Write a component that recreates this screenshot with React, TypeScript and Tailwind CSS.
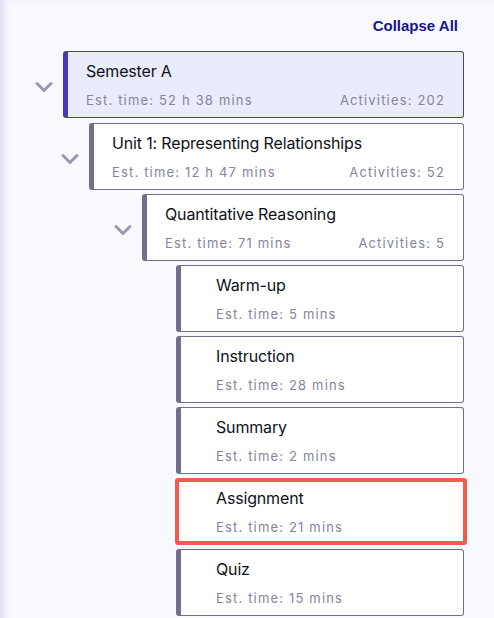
import { ChevronDown } from 'lucide-react'

type Node = {
  title: string
  time: string
  activities?: number
  level: 0 | 1 | 2 | 3
  active?: boolean
  focused?: boolean
}

const NODES: Node[] = [
  { title: 'Semester A', time: '52 h 38 mins', activities: 202, level: 0, active: true },
  { title: 'Unit 1: Representing Relationships', time: '12 h 47 mins', activities: 52, level: 1 },
  { title: 'Quantitative Reasoning', time: '71 mins', activities: 5, level: 2 },
  { title: 'Warm-up', time: '5 mins', level: 3 },
  { title: 'Instruction', time: '28 mins', level: 3 },
  { title: 'Summary', time: '2 mins', level: 3 },
  { title: 'Assignment', time: '21 mins', level: 3, focused: true },
  { title: 'Quiz', time: '15 mins', level: 3 },
]

const INDENT = ['pl-[25px]', 'pl-[51px]', 'pl-[104px]', 'pl-[176px]']

function Card({ node }: { node: Node }) {
  const leaf = node.level === 3

  let frame = 'border border-l-[5px] border-[#727089] bg-white'
  if (node.active) frame = 'border border-l-[5px] border-[#4a37c0] bg-[#e8ecfb]'
  if (node.focused) frame = 'border-[4px] border-[#f45b4f] bg-white -mr-[3px] -ml-px'

  return (
    <div
      className={`flex h-[67px] flex-1 flex-col rounded-[3px] pr-[18px] ${frame} ${
        leaf ? (node.focused ? 'pl-[37px] pt-[6px]' : 'pl-[35px] pt-[9px]') : 'pl-[18px] pt-[9px]'
      }`}
    >
      <div className="h-5 text-[16px] leading-5 tracking-[-0.01em] text-[#111118]">{node.title}</div>
      <div className="mt-[10px] flex h-[18px] justify-between text-[13px] leading-[18px] tracking-[0.09em] text-[#858499]">
        <span>Est. time: {node.time}</span>
        {node.activities !== undefined && <span>Activities: {node.activities}</span>}
      </div>
    </div>
  )
}

export default function App() {
  return (
    <div
      className="min-h-[618px] bg-[#f8f9fe] pr-[30px] pb-4 shadow-[inset_7px_0_6px_-3px_rgba(200,196,240,0.5)]"
      style={{ fontFamily: 'Inter, "Noto Sans", sans-serif' }}
    >
      <div className="flex justify-end pt-[16px] pb-[15px] pr-[6px]">
        <button
          className="text-[15px] font-bold leading-5 text-[#16158a]"
          style={{ fontFamily: '"Liberation Sans", Arial, sans-serif' }}
        >
          Collapse All
        </button>
      </div>

      <div className="flex flex-col gap-[4px]">
        {NODES.map((node, i) => (
          <div key={i} className={`flex items-center ${INDENT[node.level]} ${i === 1 ? 'mt-px' : ''}`}>
            {node.level < 3 && (
              <div className="flex w-[38px] justify-center pt-1">
                <ChevronDown size={28} strokeWidth={2.6} className="text-[#9b99ae]" />
              </div>
            )}
            <Card node={node} />
          </div>
        ))}
      </div>
    </div>
  )
}
